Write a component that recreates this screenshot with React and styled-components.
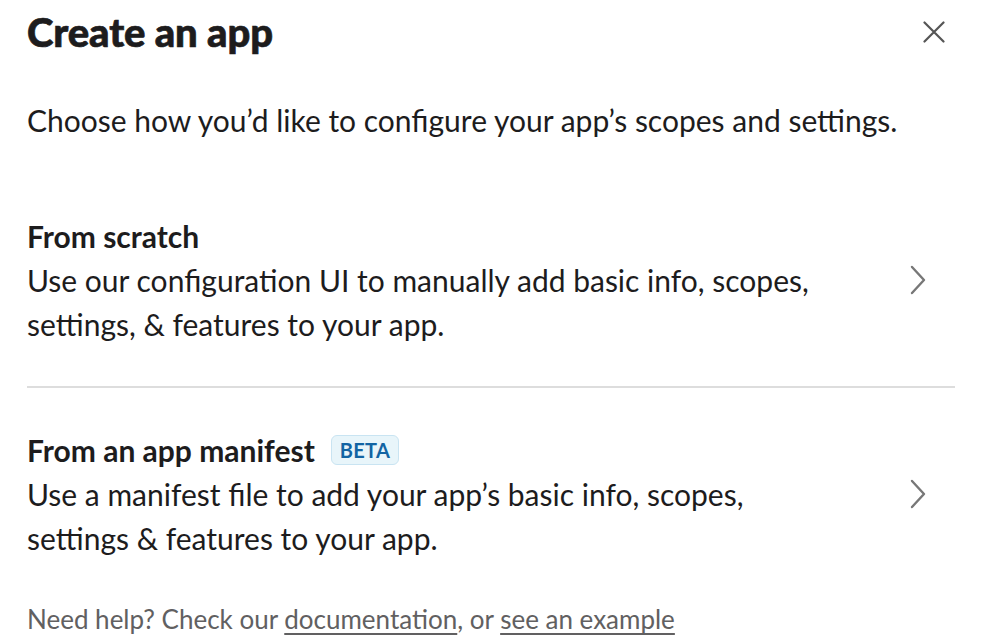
import React from 'react';
import styled, { createGlobalStyle } from 'styled-components';

const GlobalStyle = createGlobalStyle`
  html, body {
    margin: 0;
    padding: 0;
    background: #ffffff;
  }
  body {
    font-family: Lato, "Liberation Sans", sans-serif;
    color: #1d1c1d;
  }
`;

const options = [
  {
    id: 'scratch',
    title: 'From scratch',
    lines: [
      'Use our configuration UI to manually add basic info, scopes,',
      'settings, & features to your app.',
    ],
  },
  {
    id: 'manifest',
    title: 'From an app manifest',
    beta: true,
    lines: [
      'Use a manifest file to add your app\u2019s basic info, scopes,',
      'settings & features to your app.',
    ],
  },
];

function CloseIcon() {
  return (
    <svg width="22" height="22" viewBox="0 0 22 22" fill="none">
      <path d="M1.5 1.5L20.5 20.5M20.5 1.5L1.5 20.5" stroke="#555" strokeWidth="2.2" strokeLinecap="round" />
    </svg>
  );
}

function ChevronIcon() {
  return (
    <svg width="16" height="30" viewBox="0 0 16 30" fill="none">
      <path d="M2 2L14 15L2 28" stroke="#777" strokeWidth="2.4" strokeLinecap="round" strokeLinejoin="round" />
    </svg>
  );
}

export default function App() {
  return (
    <>
      <GlobalStyle />
      <Modal>
        <Header>
          <Title>Create an app</Title>
          <CloseButton aria-label="Close">
            <CloseIcon />
          </CloseButton>
        </Header>
        <Intro>Choose how you’d like to configure your app’s scopes and settings.</Intro>
        <OptionList>
          {options.map((opt) => (
            <Option key={opt.id}>
              <OptionText>
                <OptionTitle>
                  {opt.title}
                  {opt.beta && <Badge>BETA</Badge>}
                </OptionTitle>
                {opt.lines.map((line) => (
                  <OptionLine key={line}>{line}</OptionLine>
                ))}
              </OptionText>
              <Chevron>
                <ChevronIcon />
              </Chevron>
            </Option>
          ))}
        </OptionList>
        <Footer>
          Need help? Check our <FooterLink href="#">documentation</FooterLink>, or{' '}
          <FooterLink href="#">see an example</FooterLink>
        </Footer>
      </Modal>
    </>
  );
}

const Modal = styled.div`
  width: 982px;
  height: 642px;
  box-sizing: border-box;
  padding: 0 27px;
  overflow: hidden;
`;

const Header = styled.div`
  display: flex;
  align-items: center;
  justify-content: space-between;
  height: 64px;
`;

const Title = styled.h1`
  margin: 0;
  font-size: 40px;
  font-weight: 900;
  line-height: 48px;
  letter-spacing: -0.1px;
  color: #1d1c1d;
  -webkit-text-stroke: 0.7px #1d1c1d;
`;

const CloseButton = styled.button`
  display: flex;
  align-items: center;
  justify-content: center;
  margin-right: 4px;
  padding: 6px;
  border: none;
  background: none;
  cursor: pointer;
`;

const Intro = styled.p`
  margin: 37px 0 0;
  font-size: 30px;
  line-height: 38px;
`;

const OptionList = styled.div`
  margin-top: 75px;
`;

const Option = styled.div`
  display: flex;
  align-items: center;
  justify-content: space-between;
  padding: 0 0 40px;
  cursor: pointer;

  & + & {
    border-top: 2px solid #dddddd;
    padding-top: 40px;
  }
`;

const OptionText = styled.div`
  display: flex;
  flex-direction: column;
`;

const OptionTitle = styled.div`
  display: flex;
  align-items: center;
  gap: 16px;
  font-size: 30px;
  font-weight: 700;
  line-height: 44px;
`;

const Badge = styled.span`
  box-sizing: border-box;
  height: 30px;
  padding: 0 8px;
  border: 1px solid #c9e4f2;
  border-radius: 6px;
  background: #e8f5fa;
  color: #1264a3;
  font-size: 20px;
  font-weight: 700;
  line-height: 28px;
  letter-spacing: 0.3px;
`;

const OptionLine = styled.div`
  font-size: 30px;
  line-height: 44px;
`;

const Chevron = styled.div`
  display: flex;
  margin-right: 29px;
`;

const Footer = styled.p`
  margin: 3px 0 0;
  font-size: 26px;
  line-height: 32px;
  color: #616061;
`;

const FooterLink = styled.a`
  color: #616061;
  text-decoration: underline;
  text-underline-offset: 4px;
`;
